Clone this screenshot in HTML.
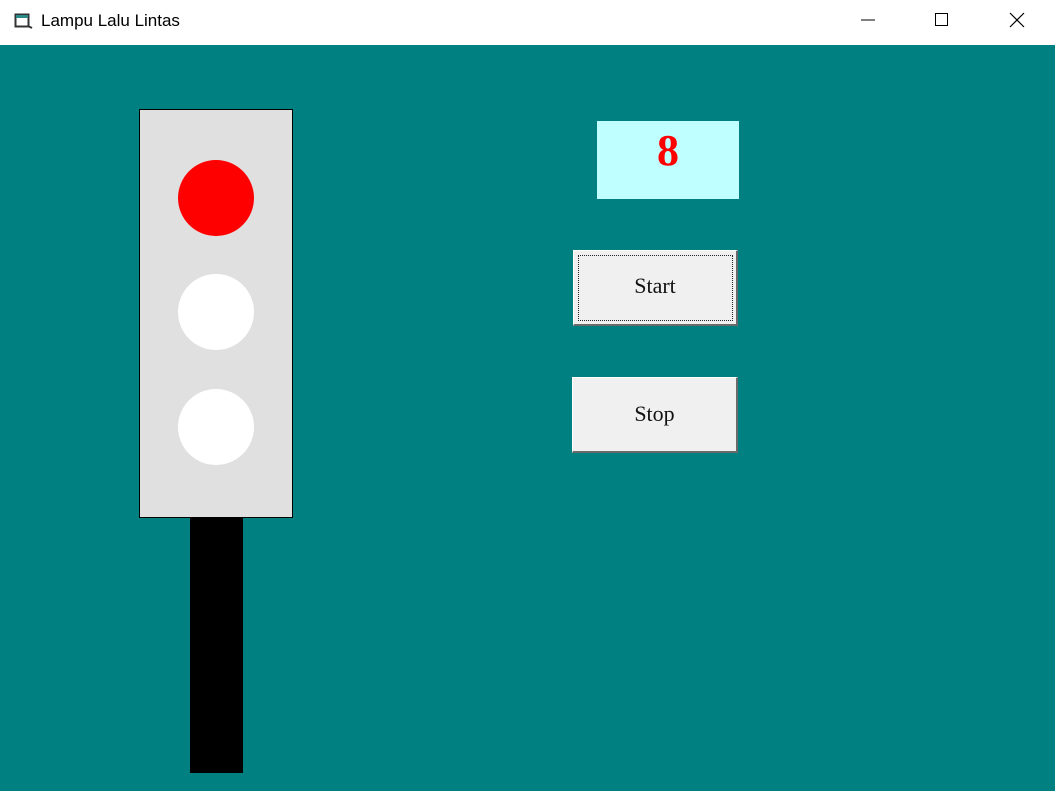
<!DOCTYPE html>
<html><head><style>
body{margin:0;width:1055px;height:791px;overflow:hidden;background:#008080;font-family:"Liberation Serif",serif;position:relative}
.tb{position:absolute;left:0;top:0;width:1055px;height:45px;background:#fff}
.tt{position:absolute;left:41px;top:11px;font:17px "Liberation Sans",sans-serif;color:#000}
.abs{position:absolute}
.btn{position:absolute;background:#f0f0f0;border:1px solid #fff;border-right:2px solid #6a6a6a;border-bottom:2px solid #6a6a6a;box-sizing:border-box;font-size:22px;text-align:center;color:#111}
</style></head><body>
<div class="tb">
<svg class="abs" style="left:14px;top:12px" width="20" height="18" viewBox="0 0 20 18"><rect x="1.5" y="2.5" width="13" height="12" fill="none" stroke="#333" stroke-width="2"/><rect x="2" y="3" width="12" height="3" fill="#2a8a8a"/><path d="M14 14 L18 16" stroke="#333" stroke-width="2"/></svg>
<div class="tt">Lampu Lalu Lintas</div>
<svg class="abs" style="left:860px;top:12px" width="16" height="16"><path d="M1 8H15" stroke="#000" stroke-width="1"/></svg>
<svg class="abs" style="left:934px;top:12px" width="16" height="16"><rect x="1.5" y="1.5" width="12" height="12" fill="none" stroke="#000"/></svg>
<svg class="abs" style="left:1009px;top:12px" width="16" height="16"><path d="M1 1L15 15M15 1L1 15" stroke="#000" stroke-width="1.2"/></svg>
</div>
<div class="abs" style="left:139px;top:109px;width:152px;height:407px;background:#e0e0e0;border:1px solid #000"></div>
<div class="abs" style="left:178px;top:160px;width:76px;height:76px;border-radius:50%;background:#f00"></div>
<div class="abs" style="left:178px;top:274px;width:76px;height:76px;border-radius:50%;background:#fff"></div>
<div class="abs" style="left:178px;top:389px;width:76px;height:76px;border-radius:50%;background:#fff"></div>
<div class="abs" style="left:190px;top:518px;width:53px;height:255px;background:#000"></div>
<div class="abs" style="left:597px;top:121px;width:142px;height:78px;background:#c0ffff;text-align:center;color:#f00;font-weight:bold;font-size:44px;line-height:60px">8</div>
<div class="btn" style="left:573px;top:250px;width:165px;height:76px;line-height:70px"><div class="abs" style="left:4px;top:4px;right:3px;bottom:3px;border:1px dotted #222"></div>Start</div>
<div class="btn" style="left:572px;top:377px;width:166px;height:76px;line-height:72px">Stop</div>
</body></html>
